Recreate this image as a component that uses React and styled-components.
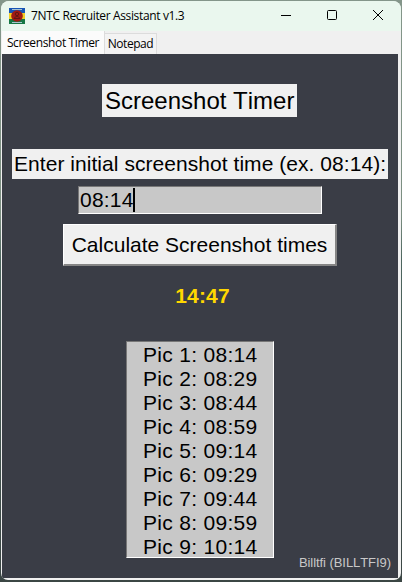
import React from 'react';
import styled, { createGlobalStyle } from 'styled-components';

const GlobalStyle = createGlobalStyle`
  * { box-sizing: border-box; }
  body { margin: 0; background: #566860; overflow: hidden; }
`;

const Desktop = styled.div`
  width: 402px;
  height: 582px;
  padding: 1px 1px 2px;
  background: linear-gradient(to bottom, #84968a 0, #7b8e81 215px, #4d665f 260px, #3b4644 100%);
  font-family: "Liberation Sans", Arial, sans-serif;
  font-kerning: none;
  color: #000;
`;

const Window = styled.main`
  display: flex;
  flex-direction: column;
  height: 579px;
  overflow: hidden;
  border-radius: 8px 8px 7px 7px;
  background: #f0f0f0;
`;

const TitleBar = styled.header`
  display: flex;
  align-items: center;
  height: 30px;
  flex: none;
  padding-left: 8px;
  background: #eaf7ee;
`;

const WindowTitle = styled.h1`
  flex: 1;
  margin: 0 0 0 6px;
  font: 400 12px/18px "Open Sans", "Noto Sans", sans-serif;
  letter-spacing: ${(p) => p.$tracking};
  white-space: nowrap;
`;

const Controls = styled.div`
  display: flex;
  height: 30px;
`;

const ControlButton = styled.button`
  display: flex;
  align-items: center;
  justify-content: center;
  width: 46px;
  padding: 0 0 2px;
  border: 0;
  background: transparent;
`;

const TabStrip = styled.nav`
  display: flex;
  align-items: flex-end;
  flex: none;
  height: 23px;
  padding-left: 1px;
`;

const Tab = styled.button`
  width: ${(p) => p.$width};
  height: ${(p) => (p.$active ? 23 : 21)}px;
  padding: 0 0 ${(p) => (p.$active ? 0 : 1)}px;
  border: solid #dcdcdc;
  border-width: ${(p) => (p.$active ? '0 1px 0 0' : '1px 1px 0 0')};
  background: ${(p) => (p.$active ? '#fbfbfb' : '#f3f3f3')};
  color: #000;
  font: 400 12px/18px "Open Sans", "Noto Sans", sans-serif;
  letter-spacing: ${(p) => p.$tracking};
  white-space: nowrap;
`;

const Panel = styled.section`
  display: flex;
  flex-direction: column;
  align-items: center;
  flex: 1;
  margin: 0 3px 2px 1px;
  padding-top: 30px;
  background: #3a3d46;
`;

const Heading = styled.h2`
  width: 195px;
  height: 33px;
  margin: 0 1px 0 0;
  padding-left: 3px;
  background: #f0f0f0;
  font-size: 24px;
  font-weight: 400;
  line-height: 33px;
  white-space: nowrap;
`;

const FieldLabel = styled.label`
  width: 376px;
  height: 30px;
  margin-top: 32px;
  padding-left: 2px;
  background: #f0f0f0;
  font-size: 21px;
  line-height: 30px;
  letter-spacing: 0.05px;
  white-space: nowrap;
`;

const TimeField = styled.div`
  display: flex;
  align-items: center;
  width: 244px;
  height: 28px;
  margin-top: 7px;
  padding-left: 1px;
  border: 1px solid;
  border-color: #777 #fff #fff #777;
  background: #c8c8c8;
  font-size: 21px;
  line-height: 24px;
  letter-spacing: 0.2px;
`;

const Caret = styled.span`
  width: 2px;
  height: 24px;
  margin-left: -1px;
  background: #000;
`;

const CalculateButton = styled.button`
  width: 274px;
  height: 42px;
  margin: 10px 0 0;
  padding: 0;
  border: solid;
  border-width: 1px 2px 2px 1px;
  border-color: #fff #858585 #858585 #fff;
  background: #f0f0f0;
  color: #000;
  font: 400 21px/38px "Liberation Sans", Arial, sans-serif;
  white-space: nowrap;
`;

const Countdown = styled.output`
  height: 24px;
  margin: 18px 0 0 5px;
  color: #ffd700;
  font-size: 21px;
  font-weight: 700;
  line-height: 24px;
  letter-spacing: 0.2px;
`;

const ResultList = styled.ul`
  width: 148px;
  height: 217px;
  margin: 33px 0 0;
  padding: 1px 0 0;
  border: 1px solid;
  border-color: #777 #fff #fff #777;
  background: #c8c8c8;
  list-style: none;
  font-size: 21px;
  line-height: 24px;
  letter-spacing: 0.3px;
`;

const ResultRow = styled.li`
  height: 24px;
  padding-left: 16px;
  white-space: nowrap;
`;

const Credit = styled.footer`
  align-self: flex-end;
  margin: -3px 7px 0 0;
  color: #c8c8c8;
  font-size: 13px;
  line-height: 16px;
  letter-spacing: -0.06px;
  white-space: nowrap;
`;

const AppLogo = () => (
  <svg width="16" height="16" viewBox="0 0 16 16" shapeRendering="crispEdges">
    <rect width="16" height="5" fill="#1755b5" />
    <rect y="5" width="16" height="6" fill="#f1cf25" />
    <rect y="11" width="16" height="5" fill="#167744" />
    <path d="M3 1.5h10M3 14.5h10" stroke="#a9c3cf" strokeWidth="1" />
    <g shapeRendering="auto">
      <circle cx="8" cy="8" r="5.8" fill="#a01b14" />
      <circle cx="8" cy="6" r="1.7" fill="none" stroke="#5b1512" strokeWidth=".9" />
      <path d="M5 10.5L7 8.3h2l2 2.2z" fill="none" stroke="#5b1512" strokeWidth=".9" />
    </g>
  </svg>
);

const times = ['08:14', '08:29', '08:44', '08:59', '09:14', '09:29', '09:44', '09:59', '10:14'];

export default function App() {
  return (
    <Desktop>
      <GlobalStyle />
      <Window>
        <TitleBar>
          <AppLogo />
          <WindowTitle $tracking="-0.36px">7NTC Recruiter Assistant v1.3</WindowTitle>
          <Controls>
            <ControlButton aria-label="Minimize">
              <svg width="12" height="12" fill="none" stroke="#000">
                <path d="M1 6.5h10" />
              </svg>
            </ControlButton>
            <ControlButton aria-label="Maximize">
              <svg width="12" height="12" fill="none" stroke="#000">
                <rect x="1.5" y="1.5" width="9" height="9" rx="1" />
              </svg>
            </ControlButton>
            <ControlButton aria-label="Close">
              <svg width="12" height="12" fill="none" stroke="#000">
                <path d="M1 1l10 10M11 1L1 11" />
              </svg>
            </ControlButton>
          </Controls>
        </TitleBar>
        <TabStrip>
          <Tab $active $width="103px" $tracking="-0.37px">Screenshot Timer</Tab>
          <Tab $width="52px" $tracking="-0.45px">Notepad</Tab>
        </TabStrip>
        <Panel>
          <Heading>Screenshot Timer</Heading>
          <FieldLabel>Enter initial screenshot time (ex. 08:14):</FieldLabel>
          <TimeField>08:14<Caret /></TimeField>
          <CalculateButton>Calculate Screenshot times</CalculateButton>
          <Countdown>14:47</Countdown>
          <ResultList>
            {times.map((time, i) => (
              <ResultRow key={time}>{`Pic ${i + 1}: ${time}`}</ResultRow>
            ))}
          </ResultList>
          <Credit>Billtfi (BILLTFI9)</Credit>
        </Panel>
      </Window>
    </Desktop>
  );
}
